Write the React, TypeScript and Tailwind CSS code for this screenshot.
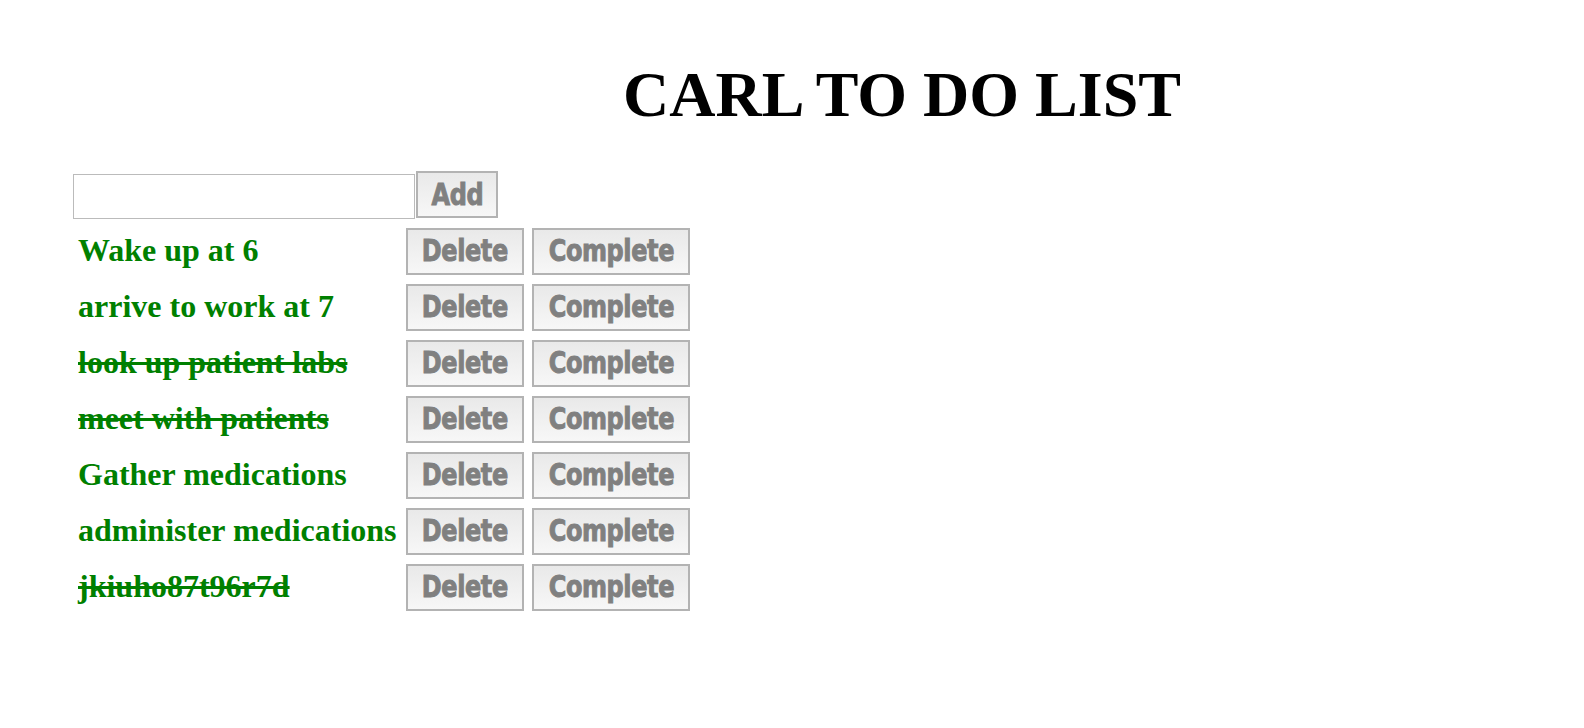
const todos = [
  { text: 'Wake up at 6', done: false },
  { text: 'arrive to work at 7', done: false },
  { text: 'look up patient labs', done: true },
  { text: 'meet with patients', done: true },
  { text: 'Gather medications', done: false },
  { text: 'administer medications', done: false },
  { text: 'jkiuho87t96r7d', done: true },
]

const btn =
  "h-[47px] border-2 border-[#b3b3b3] bg-gradient-to-b from-[#e9e9e9] to-[#f7f7f7] text-[#808080] flex items-center justify-center overflow-hidden"

function Label({ children }: { children: string }) {
  return (
    <span className="inline-block scale-x-[0.8] font-['DejaVu_Sans',sans-serif] font-bold text-[30px] leading-none tracking-[-0.5px] whitespace-nowrap [-webkit-text-stroke:1px_#808080]">
      {children}
    </span>
  )
}

export default function App() {
  return (
    <div className="min-h-screen bg-white font-['Liberation_Serif','Times_New_Roman',serif]">
      <div className="flex justify-center pl-[220px] pt-[58px]">
        <h1 className="text-[64px] font-bold leading-[1.15] text-black">CARL TO DO LIST</h1>
      </div>

      <div className="pl-[73px] pt-[39px]">
        <div className="flex items-center">
          <input
            type="text"
            className="w-[342px] h-[45px] border border-[#bbbbbb] bg-white outline-none mt-[3px]"
          />
          <button className={btn + ' w-[82px] ml-px'}>
            <Label>Add</Label>
          </button>
        </div>

        <ul className="mt-[9px] flex flex-col gap-[9px]">
          {todos.map((t) => (
            <li key={t.text} className="flex items-center">
              <span
                className={
                  'w-[333px] pl-[5px] pb-[3px] text-[32px] font-bold text-[#008000] leading-none ' +
                  (t.done ? 'line-through' : '')
                }
              >
                {t.text}
              </span>
              <button className={btn + ' w-[118px]'}>
                <Label>Delete</Label>
              </button>
              <button className={btn + ' w-[158px] ml-[8px]'}>
                <Label>Complete</Label>
              </button>
            </li>
          ))}
        </ul>
      </div>
    </div>
  )
}
